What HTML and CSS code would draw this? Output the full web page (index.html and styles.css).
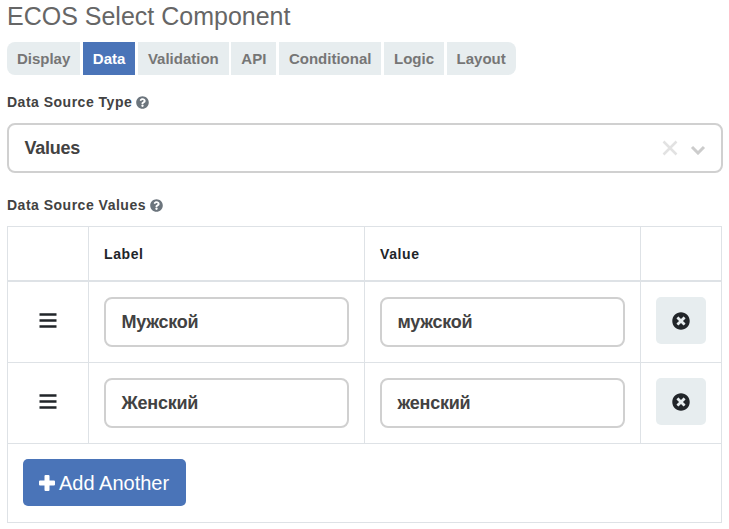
FILE: index.html
```html
<!DOCTYPE html>
<html lang="en">
<head>
<meta charset="utf-8">
<title>ECOS Select Component</title>
<link rel="stylesheet" href="styles.css">
</head>
<body>
<svg class="defs" aria-hidden="true">
  <symbol id="help" viewBox="0 0 512 512"><path d="M504 256c0 137-111 248-248 248S8 393 8 256 119 8 256 8s248 111 248 248zM262.700 90c-54.500 0-89.300 23-116.500 63.800-3.500 5.300-2.400 12.400 2.700 16.300l34.700 26.300c5.200 3.900 12.600 3 16.700-2.100 17.900-22.700 30.100-35.800 57.300-35.800 20.400 0 45.700 13.100 45.700 33 0 15-12.400 22.700-32.500 34C247.100 238.500 216 254.900 216 296v4c0 6.600 5.400 12 12 12h56c6.600 0 12-5.400 12-12v-1.300c0-28.500 83.200-29.600 83.200-106.700 0-58-60.200-102-116.500-102zM256 338c-25.400 0-46 20.600-46 46s20.600 46 46 46 46-20.600 46-46-20.600-46-46-46z"/></symbol>
  <symbol id="remove" viewBox="0 0 512 512"><path d="M256 8C119 8 8 119 8 256s111 248 248 248 248-111 248-248S393 8 256 8zm121.600 313.100c4.700 4.700 4.700 12.300 0 17L338 377.600c-4.700 4.700-12.300 4.700-17 0L256 312l-65.100 65.600c-4.700 4.700-12.300 4.700-17 0L134.400 338c-4.700-4.700-4.700-12.300 0-17l65.600-65-65.600-65.100c-4.700-4.700-4.700-12.300 0-17l39.600-39.600c4.700-4.700 12.300-4.700 17 0l65 65.700 65.100-65.600c4.700-4.700 12.300-4.700 17 0l39.600 39.600c4.700 4.700 4.700 12.300 0 17L312 256z"/></symbol>
</svg>
<main>
  <h1>ECOS Select Component</h1>
  <nav class="tabs">
    <a class="tab">Display</a>
    <a class="tab active">Data</a>
    <a class="tab">Validation</a>
    <a class="tab">API</a>
    <a class="tab">Conditional</a>
    <a class="tab">Logic</a>
    <a class="tab">Layout</a>
  </nav>

  <div class="label">Data Source Type<svg class="help"><use href="#help"/></svg></div>
  <div class="field select">
    <span>Values</span>
    <svg class="clear" viewBox="0 0 16 16"><path d="M1.500 1.500l13 13m0-13l-13 13"/></svg>
    <svg class="chevron" viewBox="0 0 16 10"><path d="M2 2l6 6 6-6"/></svg>
  </div>

  <div class="label second">Data Source Values<svg class="help"><use href="#help"/></svg></div>
  <section class="table">
    <div class="row head">
      <div class="cell"></div>
      <div class="cell">Label</div>
      <div class="cell">Value</div>
      <div class="cell"></div>
    </div>
    <div class="row">
      <div class="cell handle"><svg class="bars" viewBox="0 0 18 15"><path d="M.5 1.500h17M.5 7.500h17M.5 13.500h17"/></svg></div>
      <div class="cell"><div class="field">Мужской</div></div>
      <div class="cell"><div class="field">мужской</div></div>
      <div class="cell"><button class="delete" aria-label="Remove"><svg><use href="#remove"/></svg></button></div>
    </div>
    <div class="row">
      <div class="cell handle"><svg class="bars" viewBox="0 0 18 15"><path d="M.5 1.500h17M.5 7.500h17M.5 13.500h17"/></svg></div>
      <div class="cell"><div class="field">Женский</div></div>
      <div class="cell"><div class="field">женский</div></div>
      <div class="cell"><button class="delete" aria-label="Remove"><svg><use href="#remove"/></svg></button></div>
    </div>
    <div class="foot">
      <button class="add"><svg viewBox="0 0 16 16"><path d="M5.500 1q0-1 1-1h3q1 0 1 1v4.500H15q1 0 1 1v3q0 1-1 1h-4.500V15q0 1-1 1h-3q-1 0-1-1v-4.500H1q-1 0-1-1v-3q0-1 1-1h4.500z"/></svg>Add Another</button>
    </div>
  </section>
</main>
</body>
</html>
```
FILE: styles.css
```css
* { box-sizing: border-box; }
body {
  margin: 0;
  background: #fff;
  color: #424242;
  font-family: "Liberation Sans", Arial, sans-serif;
}
.defs { display: none; }
main { width: 723px; padding-left: 7px; }
h1 {
  margin: 0;
  height: 42px;
  color: #666;
  font-size: 25px;
  font-weight: 400;
  line-height: 32px;
}
.tabs { display: flex; gap: 2.8px; height: 33px; }
.tab {
  padding: 0 9.9px;
  background: #e7edef;
  color: #767676;
  font-size: 15px;
  font-weight: 700;
  line-height: 33px;
}
.tab:first-child { border-radius: 8px 0 0 8px; }
.tab:last-child { border-radius: 0 8px 8px 0; }
.tab.active { background: #4a74b8; color: #fff; }
.label {
  display: flex;
  align-items: center;
  height: 20px;
  margin: 17px 0 11px;
  font-size: 14px;
  font-weight: 700;
  letter-spacing: .5px;
}
.label.second { margin: 22px 0 11px; }
.help { width: 13px; height: 13px; margin-left: 4px; fill: #6c757d; }
.field {
  display: flex;
  align-items: center;
  height: 50px;
  padding: 0 15.5px;
  border: 2px solid #d0d0d0;
  border-radius: 8px;
  font-size: 18px;
  font-weight: 700;
  letter-spacing: -.25px;
}
.select span { flex: 1; }
.clear { width: 16px; height: 16px; fill: none; stroke: #e2e2e2; stroke-width: 2.500; }
.chevron { width: 16px; height: 10px; margin: 3px 0 0 12px; fill: none; stroke: #ccc; stroke-width: 3; }
.table { width: 715px; border: 1px solid #dee2e6; }
.row {
  display: grid;
  grid-template-columns: 81px 276px 276px 80px;
  height: 81px;
  border-bottom: 1px solid #dee2e6;
}
.row.head {
  height: 55px;
  border-bottom-width: 2px;
  color: #212529;
  font-size: 14px;
  font-weight: 700;
  letter-spacing: .6px;
  line-height: 24px;
}
.cell { padding: 15px; border-right: 1px solid #dee2e6; }
.cell:last-child { border-right: 0; }
.handle { display: flex; align-items: center; justify-content: center; padding-bottom: 18px; }
.bars { width: 18px; height: 15px; fill: none; stroke: #212529; stroke-width: 2.700; }
button { border: 0; font-family: inherit; }
.delete {
  display: flex;
  align-items: center;
  justify-content: center;
  width: 50px;
  height: 47px;
  border-radius: 5px;
  background: #e7edef;
}
.delete svg { width: 18px; height: 18px; fill: #212529; }
.foot { height: 78px; padding: 15px; }
.add {
  display: flex;
  align-items: center;
  width: 163px;
  height: 47px;
  padding: 0 0 0 16px;
  border-radius: 5px;
  background: #4a74b8;
  color: #fff;
  font-size: 20px;
  line-height: 24px;
  white-space: nowrap;
}
.add svg { width: 16px; height: 16px; margin-right: 4px; fill: #fff; flex: none; }
```
